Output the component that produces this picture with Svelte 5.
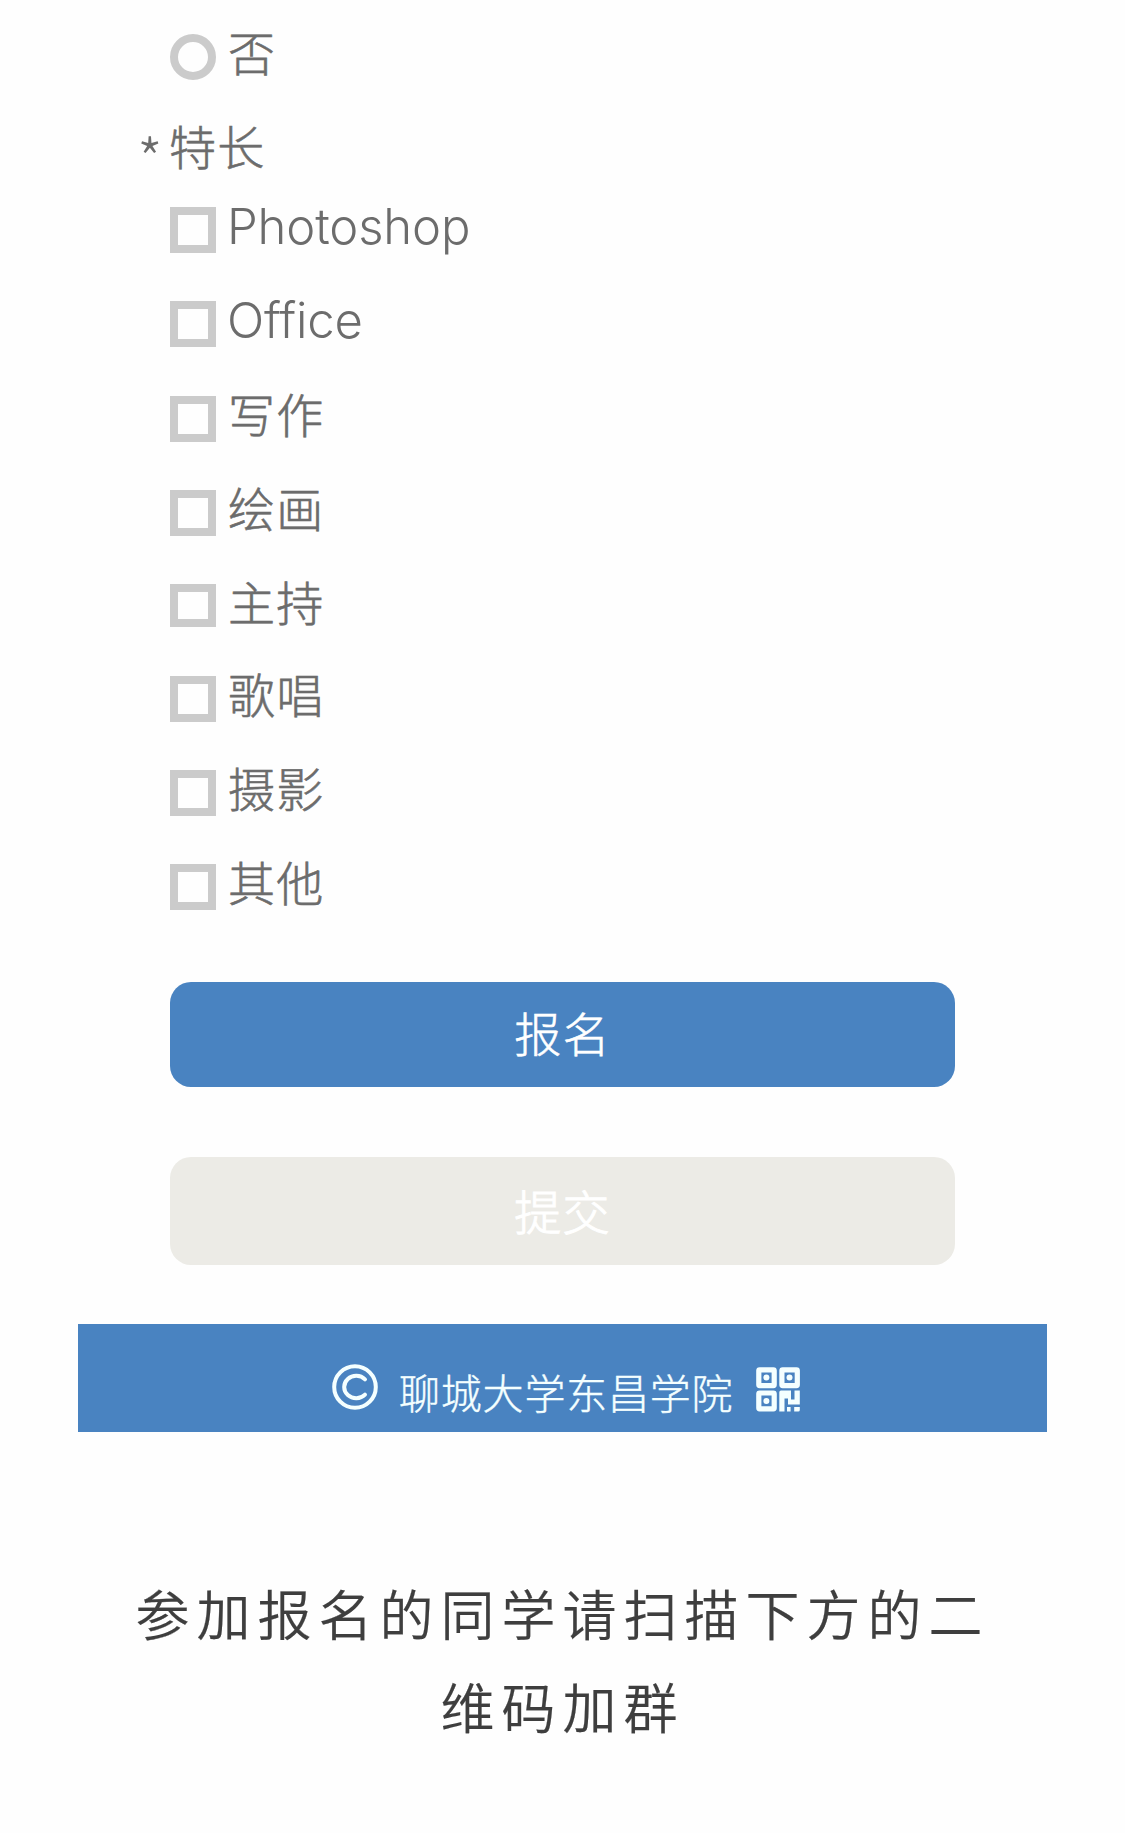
<script>
  const skills = [
    { label: 'Photoshop', latin: true },
    { label: 'Office', latin: true },
    { label: '写作' },
    { label: '绘画' },
    { label: '主持', compact: true },
    { label: '歌唱' },
    { label: '摄影' },
    { label: '其他' }
  ];
</script>

<main>
  <section class="form">
    <div class="option first">
      <span class="radio"></span>
      <span class="label">否</span>
    </div>

    <h2><span class="star">*</span><span class="label">特长</span></h2>

    <div class="skills">
      {#each skills as skill}
        <div class="option" class:compact={skill.compact}>
          <span class="box"></span>
          <span class="label" class:latin={skill.latin}>{skill.label}</span>
        </div>
      {/each}
    </div>

    <button class="primary">报名</button>
    <button class="muted">提交</button>
  </section>

  <footer>
    <svg class="copyright" viewBox="0 0 46 46">
      <circle cx="23" cy="23" r="20.8" />
      <path d="M33 15.4A12 11.2 0 1 0 33 30.6" />
    </svg>
    <span class="school">聊城大学东昌学院</span>
    <svg class="qr" viewBox="0 0 44 45">
      <g class="frames">
        <rect x="2.8" y="2.8" width="15.4" height="15.8" rx="0.8" />
        <rect x="25.9" y="2.8" width="15.4" height="15.8" rx="0.8" />
        <rect x="2.8" y="26" width="15.4" height="15.8" rx="0.8" />
      </g>
      <circle cx="10.4" cy="10.6" r="3" />
      <circle cx="33.5" cy="10.6" r="3" />
      <circle cx="10.4" cy="34" r="3" />
      <path d="M25 23.5H35V32.5H38.5V23.5H43.8V37.5H32V31.5H28.5V44.5H23.3V25.2Q23.3 23.5 25 23.5Z" />
      <path d="M31 40H34.6V44.5H31ZM38.2 40H43.8V43Q43.8 44.5 42.2 44.5H38.2Z" />
    </svg>
  </footer>

  <p>参加报名的同学请扫描下方的二<br />维码加群</p>
</main>

<style>
  :global(body) {
    margin: 0;
    background: #fefefe;
  }

  main {
    width: 1125px;
    height: 1833px;
    overflow: hidden;
    font-family: 'Noto Sans CJK SC', sans-serif;
    font-weight: 300;
    color: #6c6c6c;
  }

  .form {
    display: flex;
    flex-direction: column;
    padding: 34px 170px 0;
  }

  .option {
    display: flex;
    align-items: flex-start;
    height: 94.3px;
    gap: 12px;
  }

  .option.compact {
    height: 91.4px;
  }

  .option.first {
    height: 92px;
  }

  .radio,
  .box {
    box-sizing: border-box;
    width: 46px;
    height: 46px;
    border: 8px solid #cbcbcb;
  }

  .radio {
    border-radius: 50%;
  }

  .compact .box {
    height: 43px;
  }

  .label {
    font-size: 47px;
    line-height: 48px;
    letter-spacing: 1.3px;
    margin-top: -7px;
    -webkit-text-stroke: 0.6px currentColor;
  }

  .label.latin {
    margin: -4.5px 0 0 -1px;
    font-family: Inter, 'Noto Sans CJK SC', sans-serif;
    font-size: 49px;
    letter-spacing: -0.15px;
    -webkit-text-stroke: 0;
  }

  h2 {
    display: flex;
    margin: 0 0 0 -31px;
    height: 81px;
    font-weight: 300;
  }

  h2 .label {
    margin: -5px 0 0 -2px;
  }

  .star {
    width: 31px;
    font-size: 58px;
    line-height: 62px;
    margin-left: -2px;
    margin-right: 3px;
  }

  .skills {
    height: 775px;
  }

  button {
    display: block;
    width: 785px;
    padding: 0;
    border: 0;
    border-radius: 21px;
    font: 300 47px/96px 'Noto Sans CJK SC', sans-serif;
    letter-spacing: 1.3px;
    color: #fff;
    -webkit-text-stroke: 0.6px currentColor;
  }

  .primary {
    height: 105px;
    padding-bottom: 6px;
    background: #4983c1;
  }

  .muted {
    height: 108px;
    margin-top: 70px;
    padding-bottom: 2px;
    background: #ecebe6;
    -webkit-text-stroke: 1px currentColor;
  }

  footer {
    display: flex;
    box-sizing: border-box;
    width: 969px;
    height: 108px;
    margin: 59px 0 0 78px;
    padding: 40px 0 0 254px;
    background: #4983c1;
    color: #f4ffff;
  }

  .copyright {
    width: 46px;
    height: 46px;
    fill: none;
    stroke: #f4ffff;
    stroke-width: 4;
    stroke-linecap: round;
  }

  .school {
    margin-left: 21px;
    width: 335px;
    font-size: 41px;
    line-height: 55px;
    letter-spacing: 0.8px;
    white-space: nowrap;
    -webkit-text-stroke: 0.4px currentColor;
  }

  .qr {
    width: 44px;
    height: 45px;
    margin: 3px 0 0 22px;
    fill: #f4ffff;
  }

  .frames {
    fill: none;
    stroke: #f4ffff;
    stroke-width: 5.2;
  }

  p {
    margin: 133.5px 0 0;
    font-size: 54px;
    font-weight: 350;
    line-height: 93px;
    letter-spacing: 7px;
    text-align: center;
    color: #3e3e3e;
    -webkit-text-stroke: 0.2px currentColor;
  }
</style>
